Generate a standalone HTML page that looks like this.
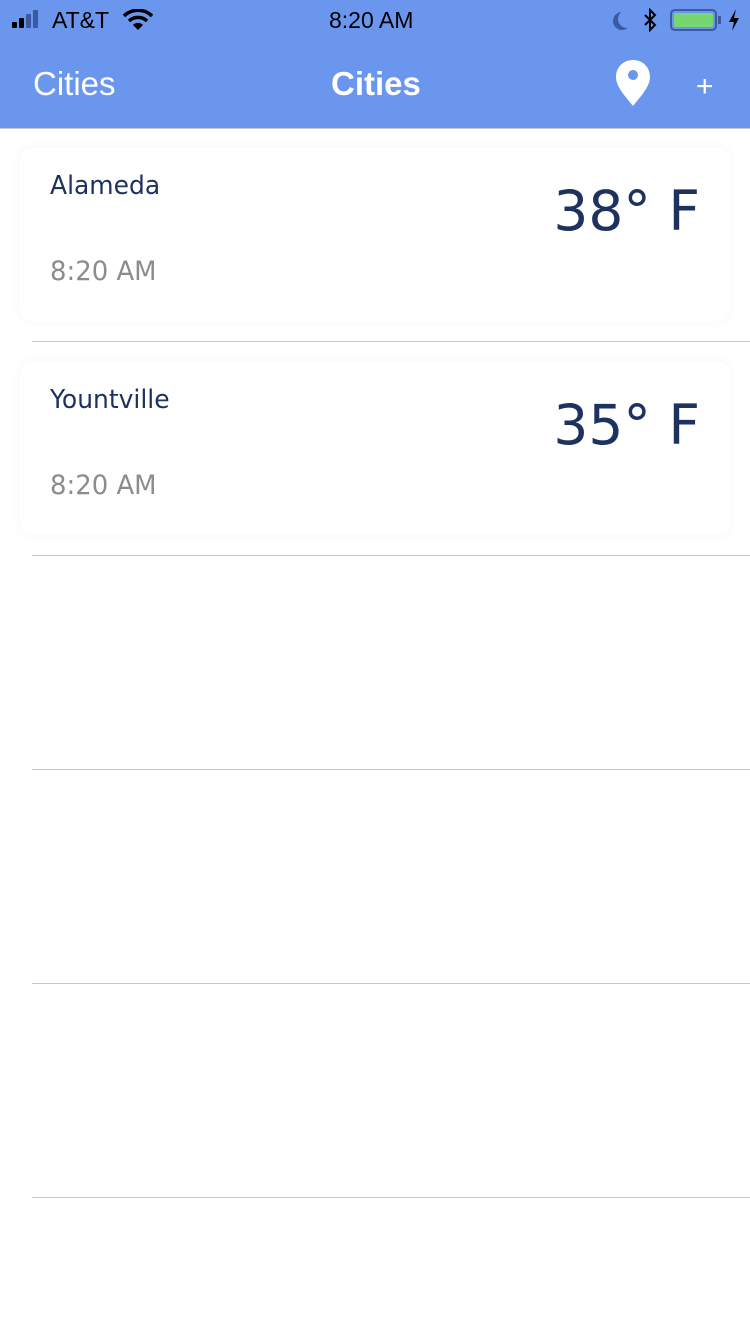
<!DOCTYPE html>
<html><head><meta charset="utf-8"><style>
*{margin:0;padding:0;box-sizing:border-box}
body{width:750px;height:1334px;background:#fff;position:relative;overflow:hidden;font-family:"Liberation Sans",sans-serif}
.hdr{position:absolute;left:0;top:0;width:750px;height:129px;background:#6a96ee;border-bottom:1px solid #c4c8d0}
.t{position:absolute;color:#000;font-size:23px}
.nav{position:absolute;color:#fff;font-size:33px;top:65px}
.card{position:absolute;left:20px;width:710px;height:173px;background:#fff;border-radius:12px;box-shadow:0 0 12px rgba(0,0,0,0.04)}
.city{position:absolute;left:30px;top:23px;font-family:"DejaVu Sans",sans-serif;font-size:26px;color:#1e3260;transform:scaleX(0.96);transform-origin:left}
.time{position:absolute;left:30px;top:108px;font-family:"DejaVu Sans",sans-serif;font-size:27px;color:#8c8c8c;transform:scaleX(0.96);transform-origin:left}
.temp{position:absolute;right:30px;top:31px;font-family:"DejaVu Sans",sans-serif;font-size:55px;color:#1e3260}
.line{position:absolute;left:32px;right:0;height:1px;background:#c8c8c8}
</style></head><body>
<div class="hdr">
 <div style="position:absolute;left:12px;top:22px;width:5px;height:6px;background:#000;border-radius:1px"></div>
 <div style="position:absolute;left:19px;top:18px;width:5px;height:10px;background:#000;border-radius:1px"></div>
 <div style="position:absolute;left:26px;top:14px;width:5px;height:14px;background:#3b5aa0;border-radius:1px"></div>
 <div style="position:absolute;left:33px;top:10px;width:5px;height:18px;background:#3b5aa0;border-radius:1px"></div>
 <div class="t" style="left:52px;top:7px">AT&amp;T</div>
 <svg style="position:absolute;left:123px;top:9px" width="30" height="22" viewBox="0 0 30 22"><path d="M1 7 A20 20 0 0 1 29 7" stroke="#000" stroke-width="3.5" fill="none"/><path d="M6 12 A13 13 0 0 1 24 12" stroke="#000" stroke-width="3.5" fill="none"/><path d="M15 21 L10 16 A7 7 0 0 1 20 16 Z" fill="#000"/></svg>
 <div class="t" style="left:329px;top:7px;font-weight:500">8:20 AM</div>
 <div style="position:absolute;left:612px;top:10px;width:18px;height:18px;border-radius:50%;box-shadow:-5px 2px 0 0 #3b5aa0;transform:translateX(6px)"></div>
 <svg style="position:absolute;left:643px;top:8px" width="14" height="24" viewBox="0 0 14 24"><path d="M2 7 L12 17 L7 22 V2 L12 7 L2 17" stroke="#000" stroke-width="2" fill="none"/></svg>
 <div style="position:absolute;left:670px;top:9px;width:47px;height:22px;border:2px solid #3b5aa0;border-radius:5px;padding:2px"><div style="width:100%;height:100%;background:#76d672;border-radius:2px"></div></div>
 <div style="position:absolute;left:718px;top:16px;width:3px;height:8px;background:#3b5aa0"></div>
 <svg style="position:absolute;left:728px;top:9px" width="12" height="22" viewBox="0 0 12 22"><path d="M8 0 L1 13 H6 L4 22 L11 9 H6 Z" fill="#000"/></svg>
 <div class="nav" style="left:33px">Cities</div>
 <div class="nav" style="left:331px;font-weight:bold">Cities</div>
 <svg style="position:absolute;left:615px;top:59px" width="36" height="48" viewBox="0 0 36 48"><path d="M18 1C8 1 1 8.5 1 18c0 10 10 20 17 29 7-9 17-19 17-29C35 8.5 28 1 18 1z" fill="#fff"/><circle cx="18" cy="16" r="5" fill="#6a96ee"/></svg>
 <div class="nav" style="left:696px;top:70px;font-size:30px">+</div>
</div>
<div class="card" style="top:148px"><div class="city">Alameda</div><div class="temp">38° F</div><div class="time">8:20 AM</div></div>
<div class="line" style="top:341px"></div>
<div class="card" style="top:362px"><div class="city">Yountville</div><div class="temp">35° F</div><div class="time">8:20 AM</div></div>
<div class="line" style="top:555px"></div>
<div class="line" style="top:769px"></div>
<div class="line" style="top:983px"></div>
<div class="line" style="top:1197px"></div>
</body></html>
